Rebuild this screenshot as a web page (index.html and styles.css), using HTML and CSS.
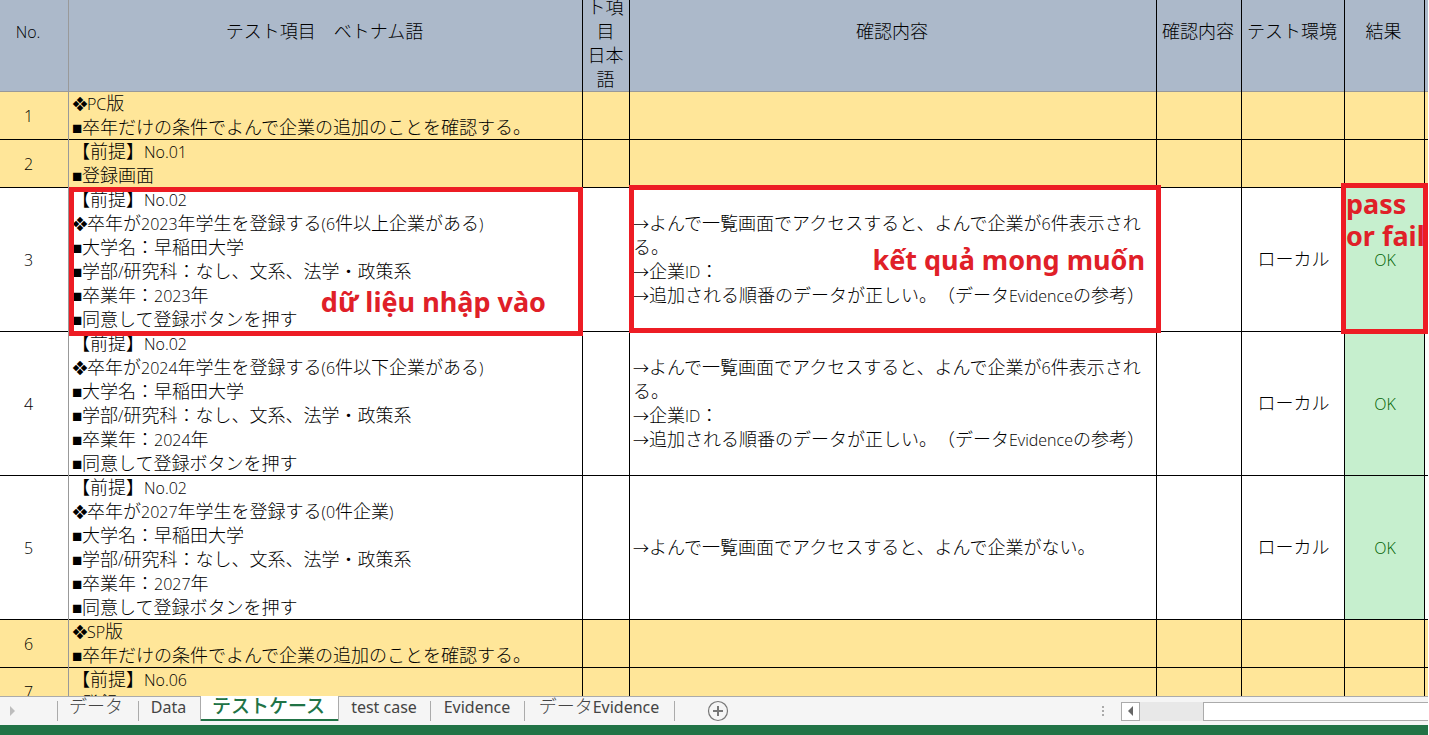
FILE: index.html
```html
<!DOCTYPE html>
<html lang="ja">
<head>
<meta charset="utf-8">
<title>テストケース</title>
<link rel="stylesheet" href="styles.css">
</head>
<body>
<div class="app">
  <main class="sheet">
    <table class="grid">
      <colgroup>
        <col class="c-no"><col class="c-item"><col class="c-ja"><col class="c-check"><col class="c-check2"><col class="c-env"><col class="c-result"><col>
      </colgroup>
      <thead>
        <tr>
          <th><span class="en">No.</span></th>
          <th>テスト項目　ベトナム語</th>
          <th class="tall">ト項目<br>日本語</th>
          <th>確認内容</th>
          <th>確認内容</th>
          <th>テスト環境</th>
          <th>結果</th>
          <th></th>
        </tr>
      </thead>
      <tbody>
        <tr class="group">
          <td class="num">1</td>
          <td><span class="dia">❖</span><span class="en">PC</span>版<br><span class="sq">■</span>卒年だけの条件でよんで企業の追加のことを確認する。</td>
          <td></td><td></td><td></td><td></td><td></td><td></td>
        </tr>
        <tr class="group">
          <td class="num">2</td>
          <td>【前提】<span class="en">No.01</span><br><span class="sq">■</span>登録画面</td>
          <td></td><td></td><td></td><td></td><td></td><td></td>
        </tr>
        <tr>
          <td class="num">3</td>
          <td>【前提】<span class="en">No.02</span><br><span class="dia">❖</span>卒年が<span class="en">2023</span>年学生を登録する<span class="en">(6</span>件以上企業がある<span class="en">)</span><br><span class="sq">■</span>大学名：早稲田大学<br><span class="sq">■</span>学部<span class="en">/</span>研究科：なし、文系、法学・政策系<br><span class="sq">■</span>卒業年：<span class="en">2023</span>年<br><span class="sq">■</span>同意して登録ボタンを押す</td>
          <td></td>
          <td><span class="arr">→</span>よんで一覧画面でアクセスすると、よんで企業が<span class="en">6</span>件表示される。<br><span class="arr">→</span>企業<span class="en">ID</span>：<br><span class="arr">→</span>追加される順番のデータが正しい。（データ<span class="en">Evidence</span>の参考）</td>
          <td></td>
          <td class="mid">ローカル</td>
          <td class="ok">OK</td>
          <td></td>
        </tr>
        <tr>
          <td class="num">4</td>
          <td>【前提】<span class="en">No.02</span><br><span class="dia">❖</span>卒年が<span class="en">2024</span>年学生を登録する<span class="en">(6</span>件以下企業がある<span class="en">)</span><br><span class="sq">■</span>大学名：早稲田大学<br><span class="sq">■</span>学部<span class="en">/</span>研究科：なし、文系、法学・政策系<br><span class="sq">■</span>卒業年：<span class="en">2024</span>年<br><span class="sq">■</span>同意して登録ボタンを押す</td>
          <td></td>
          <td><span class="arr">→</span>よんで一覧画面でアクセスすると、よんで企業が<span class="en">6</span>件表示される。<br><span class="arr">→</span>企業<span class="en">ID</span>：<br><span class="arr">→</span>追加される順番のデータが正しい。（データ<span class="en">Evidence</span>の参考）</td>
          <td></td>
          <td class="mid">ローカル</td>
          <td class="ok">OK</td>
          <td></td>
        </tr>
        <tr>
          <td class="num">5</td>
          <td>【前提】<span class="en">No.02</span><br><span class="dia">❖</span>卒年が<span class="en">2027</span>年学生を登録する<span class="en">(0</span>件企業<span class="en">)</span><br><span class="sq">■</span>大学名：早稲田大学<br><span class="sq">■</span>学部<span class="en">/</span>研究科：なし、文系、法学・政策系<br><span class="sq">■</span>卒業年：<span class="en">2027</span>年<br><span class="sq">■</span>同意して登録ボタンを押す</td>
          <td></td>
          <td><span class="arr">→</span>よんで一覧画面でアクセスすると、よんで企業がない。</td>
          <td></td>
          <td class="mid">ローカル</td>
          <td class="ok">OK</td>
          <td></td>
        </tr>
        <tr class="group">
          <td class="num">6</td>
          <td><span class="dia">❖</span><span class="en">SP</span>版<br><span class="sq">■</span>卒年だけの条件でよんで企業の追加のことを確認する。</td>
          <td></td><td></td><td></td><td></td><td></td><td></td>
        </tr>
        <tr class="group">
          <td class="num">7</td>
          <td>【前提】<span class="en">No.06</span><br><span class="sq">■</span>登録画面</td>
          <td></td><td></td><td></td><td></td><td></td><td></td>
        </tr>
      </tbody>
    </table>
    <div class="note note-input"><span>dữ liệu nhập vào</span></div>
    <div class="note note-expect"><span>kết quả mong muốn</span></div>
    <div class="note note-result"><span>pass<br>or fail</span></div>
  </main>
  <footer class="bar">
    <button class="nav" type="button" aria-label="Next sheet"><svg width="6" height="10" viewBox="0 0 6 10"><path d="M0 0 5 5 0 10z" fill="#bdbdbd"/></svg></button>
    <nav class="tabs">
      <button class="tab t-a" type="button">データ</button>
      <button class="tab t-b" type="button"><span class="tab-en">Data</span></button>
      <button class="tab active" type="button">テストケース</button>
      <button class="tab t-c" type="button"><span class="tab-en">test case</span></button>
      <button class="tab t-d" type="button"><span class="tab-en">Evidence</span></button>
      <button class="tab t-e" type="button">データ<span class="tab-en">Evidence</span></button>
    </nav>
    <button class="add" type="button" aria-label="New sheet"><svg width="22" height="22" viewBox="0 0 22 22"><circle cx="11" cy="11" r="9.5" fill="none" stroke="#777" stroke-width="1.2"/><path d="M11 6v10M6 11h10" stroke="#777" stroke-width="2"/></svg></button>
    <div class="scroll">
      <svg class="dots" width="2" height="11" viewBox="0 0 2 11"><path d="M0 0h2v2H0zM0 4h2v2H0zM0 8h2v2H0z" fill="#aaa"/></svg>
      <button class="left" type="button" aria-label="Scroll left"><svg width="5" height="10" viewBox="0 0 5 10"><path d="M5 0v10L0 5z" fill="#666"/></svg></button>
      <div class="track"><div class="thumb"></div></div>
    </div>
  </footer>
  <div class="status"></div>
</div>
</body>
</html>
```
FILE: styles.css
```css
* { box-sizing: border-box; }

body {
  margin: 0;
  background: #fff;
  color: #000;
  font: 300 18px/24px "Liberation Sans", "Noto Sans CJK JP", sans-serif;
  text-spacing-trim: space-all;
}

.app {
  display: flex;
  flex-direction: column;
  height: 100vh;
  padding-right: 1px;
  overflow: hidden;
}

.sheet {
  position: relative;
  flex: 1;
  min-height: 0;
  overflow: hidden;
}

/* grid */
.grid {
  width: 100%;
  margin-top: -4px;
  table-layout: fixed;
  border-collapse: separate;
  border-spacing: 0;
}
.c-no { width: 69px; }
.c-item { width: 514px; }
.c-ja { width: 47px; }
.c-check { width: 527px; }
.c-check2 { width: 85px; }
.c-env { width: 103px; }
.c-result { width: 80px; }

.grid th, .grid td {
  padding: 0 3px;
  vertical-align: middle;
  text-align: left;
  box-shadow: inset -1px -1px 0 #000;
}
.grid th {
  padding: 0 4px 24px 1px;
  background: #acb9ca;
  font-weight: 300;
  text-align: center;
  box-shadow: inset -1px 0 0 #000, inset 0 -1px 0 #999;
}
.grid th.tall { padding: 0 6px 0 4px; }
.grid th:first-child { padding-right: 14px; box-shadow: inset -1px -1px 0 #999; }
.grid td:first-child { padding-right: 15px; box-shadow: inset -1px 0 0 #999, inset 0 -1px 0 #000; }
.grid th:last-child { padding: 0; box-shadow: inset 0 -1px 0 #999; }
.grid td:last-child { padding: 0; box-shadow: inset 0 -1px 0 #000; }
.group td { background: #ffe699; }

.en, .grid .num, .grid .ok {
  font-family: "Open Sans", sans-serif;
  font-size: 16px;
}
.en { line-height: 16px; }
.grid .num, .grid .mid, .grid .ok { text-align: center; }
.grid .ok { background: #c6efce; color: #006100; }

.sq, .dia, .arr {
  display: inline-block;
  line-height: 16px;
}
.sq { width: 10px; font-family: "Liberation Sans", sans-serif; font-size: 17px; }
.dia { width: 15px; font-family: "DejaVu Sans", sans-serif; font-size: 16px; }
.arr { width: 16px; font-family: "Noto Sans CJK JP", sans-serif; font-size: 16px; }

/* annotations over the cells */
.note {
  position: absolute;
  display: flex;
  border: 5px solid #ed1c24;
  color: #e02028;
  font: 700 27px/32px "Noto Sans", sans-serif;
}
.note-input {
  left: 69px; top: 187px; width: 514px; height: 149px;
  justify-content: flex-end; align-items: flex-end;
  padding: 0 32px 13px;
}
.note-expect {
  left: 629px; top: 185px; width: 532px; height: 148px;
  justify-content: flex-end; align-items: center;
  padding: 2px 11px 0;
}
.note-result {
  left: 1341px; top: 183px; width: 87px; height: 151px;
  white-space: nowrap;
}

/* sheet tabs */
.bar {
  display: flex;
  align-items: stretch;
  height: 29px;
  background: #f5f5f5;
  border-top: 1px solid #ababab;
}
.bar button {
  display: flex;
  align-items: center;
  justify-content: center;
  margin: 0;
  padding: 0;
  border: 0;
  background: none;
  color: #444;
  font: 300 18px/24px "Liberation Sans", "Noto Sans CJK JP", sans-serif;
  white-space: nowrap;
}
.bar .nav { width: 26px; margin-right: 31px; }
.tabs { display: flex; }
.bar .tab {
  align-items: flex-start;
  padding-right: 2px;
  line-height: 20px;
  background: linear-gradient(#ababab, #ababab) right 4px / 1px 20px no-repeat;
}
.tab-en { font: 400 16px/20px "Noto Sans", sans-serif; }
.bar .t-a {
  width: 82px;
  padding-right: 4px;
  background-image: linear-gradient(#ababab, #ababab), linear-gradient(#ababab, #ababab);
  background-position: right 4px, left 4px;
}
.bar .t-b { width: 61px; background: none; }
.bar .active {
  width: 139px;
  height: 25px;
  margin-top: -1px;
  border: solid #ababab;
  border-width: 0 1px;
  box-shadow: inset 0 -2px 0 #217346;
  background: #fff;
  color: #217346;
  font-size: 19px;
  font-weight: 500;
  line-height: 22px;
}
.bar .t-c { width: 92px; }
.bar .t-d { width: 94px; }
.bar .t-e { width: 150px; }
.bar .add { width: 22px; margin-left: 32px; }

.scroll {
  display: flex;
  flex: 1;
  align-items: center;
  justify-content: flex-end;
}
.dots { margin-right: 17px; }
.bar .left {
  width: 19px;
  height: 19px;
  border: 1px solid #ababab;
  background: #fff;
}
.track {
  width: 288px;
  height: 19px;
  padding-left: 63px;
  background: #e8e8e8;
}
.thumb {
  height: 19px;
  border: solid #ababab;
  border-width: 1px 0 1px 1px;
  background: #fff;
}

.status { height: 10px; background: #217346; }
```
